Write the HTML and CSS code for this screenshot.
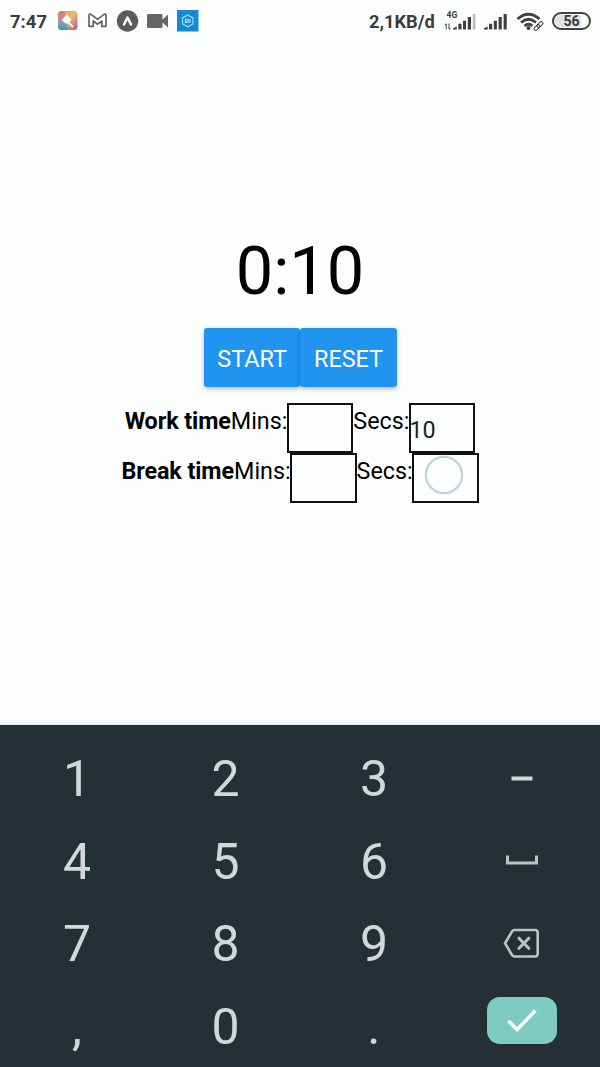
FILE: index.html
```html
<!DOCTYPE html>
<html lang="en">
<head>
<meta charset="utf-8">
<title>Timer</title>
<link rel="stylesheet" href="styles.css">
</head>
<body>
<div class="screen">
  <header class="status">
    <span class="clock">7:47</span>
    <svg class="tray" width="144" height="24" viewBox="0 0 144 24">
      <defs>
        <linearGradient id="warm" x1="0" y1="0" x2="1" y2="1"><stop offset="0" stop-color="#f08a62"/><stop offset=".5" stop-color="#e5bd62"/><stop offset="1" stop-color="#b84fa0"/></linearGradient>
        <linearGradient id="cool" x1="0" y1="0" x2="0" y2="1"><stop offset="0" stop-color="#e87858"/><stop offset=".45" stop-color="#b695a8"/><stop offset="1" stop-color="#279cd0"/></linearGradient>
      </defs>
      <rect x="3" y="2" width="19.500" height="19" rx="3.500" fill="url(#warm)"/>
      <path d="M6.500 2H9L13 21H6.500A3.500 3.500 0 0 1 3 17.500V5.500A3.500 3.500 0 0 1 6.500 2Z" fill="url(#cool)"/>
      <path d="M11.600 5.300L16.600 10.500L14.600 13.300L18.600 17.300L17.300 18.600L13.300 14.600L10.500 14.500L7 11Z" fill="#fff"/>
      <path d="M34 17.300V6.800Q34 4.500 36 5.300L42.500 10.300L49 5.300Q51 4.500 51 6.800V17.300H46.800V12L42.500 15.200L38.200 12V17.300Z" fill="none" stroke="#626262" stroke-width="1.700" stroke-linejoin="round"/>
      <circle cx="72.500" cy="12" r="10.700" fill="#5b5b5b"/>
      <path d="M69 15.500L72.500 8.500L76 15.500" fill="none" stroke="#fff" stroke-width="2.500" stroke-linecap="round" stroke-linejoin="round"/>
      <path d="M93.500 5H106Q107.500 5 107.500 6.500V10.500L113 5.500V18.500L107.500 13.500V17.500Q107.500 19 106 19H93.500Q92 19 92 17.500V6.500Q92 5 93.500 5Z" fill="#656565"/>
      <rect x="122" y="1" width="21.500" height="21.500" fill="#1689d4"/>
      <path d="M132.700 6L137.900 8.900V14.900L132.700 17.800L127.500 14.900V8.900Z" fill="none" stroke="#a6e2f5" stroke-width="1.100"/>
      <path d="M130.400 14V10.300H133.200V14M131.800 12V14M135 10V14" fill="none" stroke="#d1f3fb" stroke-width=".9"/>
    </svg>
    <span class="speed">2,1KB/d</span>
    <svg class="radio" width="104" height="30" viewBox="0 0 104 30">
      <text class="network" x="2.500" y="11.500">4G</text>
      <path d="M2.300 23.500V18M.8 19.500L2.300 17.500M5 17.500V23M5 23.500L6.300 21.500" fill="none" stroke="#666" stroke-width="1.200"/>
      <path d="M9 23.500V22.300L12.800 20.500V23.500ZM14.300 17.800H17.500V23.500H14.300ZM19 14.800H22V23.500H19ZM23.800 11H27V23.500H23.800Z" fill="#3f3f3f"/>
      <path d="M28.800 8H31.500V23.500H28.800Z" fill="#bcbcbc"/>
      <path d="M40 23.500V22.300L43.700 20.500V23.500ZM45 17.800H48.200V23.500H45ZM49.800 14.800H52.900V23.500H49.800ZM54.600 11H57.800V23.500H54.600ZM59.600 8H62.700V23.500H59.600Z" fill="#3f3f3f"/>
      <g fill="none" stroke="#3f3f3f">
        <path d="M73.500 13Q84.500 3.500 95.500 13" stroke-width="2.700"/>
        <path d="M77 16.500Q84.500 10 92 16.500" stroke-width="2.700"/>
        <path d="M80.500 20Q84.500 16.500 88.500 20" stroke-width="2.700"/>
        <rect x="-3.500" y="-1.700" width="7" height="3.400" rx="1.700" transform="translate(93 21.500) rotate(-45)"/>
        <rect x="-3.500" y="-1.700" width="7" height="3.400" rx="1.700" transform="translate(96 18.500) rotate(-45)"/>
      </g>
      <circle cx="84.500" cy="22" r="2" fill="#3f3f3f"/>
    </svg>
    <span class="battery">56</span>
  </header>

  <main class="app">
    <div class="timer">0:10</div>
    <div class="actions"><button class="button">START</button><button class="button">RESET</button></div>
    <div class="field-row"><b>Work time</b><span class="unit">Mins:</span><span class="box"></span><span class="unit">Secs:</span><span class="box">10</span></div>
    <div class="field-row"><b>Break time</b><span class="unit">Mins:</span><span class="box"></span><span class="unit">Secs:</span><span class="box"><i class="touch"></i></span></div>
  </main>

  <section class="keypad">
    <span class="key">1</span><span class="key">2</span><span class="key">3</span>
    <span class="key"><svg width="40" height="40" viewBox="0 0 40 40"><path d="M9.500 17.500H30.500V21.500H9.500Z" fill="#d3d7d7"/></svg></span>
    <span class="key">4</span><span class="key">5</span><span class="key">6</span>
    <span class="key"><svg width="40" height="40" viewBox="0 0 40 40"><path d="M5.500 13.500V21H34.500V13.500" fill="none" stroke="#bec3c2" stroke-width="3"/></svg></span>
    <span class="key">7</span><span class="key">8</span><span class="key">9</span>
    <span class="key"><svg width="40" height="40" viewBox="0 0 40 40"><path d="M12.500 6H33Q35.700 6 35.700 8.700V29.800Q35.700 32.500 33 32.500H12.500Q11 32.500 10 31L3 19.250L10 7.500Q11 6 12.500 6Z" fill="none" stroke="#bec3c2" stroke-width="2.600"/><path d="M17 14.200L26.800 24.300M26.800 14.200L17 24.300" fill="none" stroke="#bec3c2" stroke-width="3" stroke-linecap="round"/></svg></span>
    <span class="key">,</span><span class="key">0</span><span class="key">.</span>
    <span class="key"><span class="enter"><svg width="40" height="40" viewBox="0 0 40 40"><path d="M6.500 21L15 29.500L33.500 10.500" fill="none" stroke="#fff" stroke-width="3.400"/></svg></span></span>
  </section>
</div>
</body>
</html>
```
FILE: styles.css
```css
* { box-sizing: border-box; }
body { margin: 0; background: #fdfffe; font-family: Roboto, "Liberation Sans", sans-serif; color: #000; }
.screen { width: 600px; height: 1067px; display: flex; flex-direction: column; overflow: hidden; }

.status { height: 42px; flex: none; display: flex; align-items: center; padding: 0 9px 0 10px; color: #3b3b3b; font-weight: 700; font-size: 18.500px; line-height: 22px; }
.clock { width: 45px; flex: none; padding-top: 1px; }
.tray { flex: none; }
.speed { flex: none; margin-left: auto; width: 75px; padding-top: 1px; white-space: nowrap; font-size: 18.300px; }
.radio { flex: none; margin-top: -1px; }
.network { font-size: 8.500px; font-weight: 700; fill: #3b3b3b; }
.battery { flex: none; width: 39px; height: 17.500px; margin-left: 4px; border: 2px solid #424242; border-radius: 9px; background: linear-gradient(90deg, #e0e1e0 76%, #fdfffe 76%); box-shadow: inset 0 0 0 1px #fdfffe; font-size: 14px; line-height: 14px; text-align: center; }

.app { flex: 1; display: flex; flex-direction: column; align-items: center; padding-top: 190px; }
.timer { font-size: 66.670px; line-height: 78px; }
.actions { display: flex; margin: 18.300px 0 16.500px .6px; }
.button { width: 96.400px; height: 58.300px; padding: 3px 0 0; border: 0; border-radius: 3px; background: #2094ef; color: #fff; font: 23.330px/28px Roboto, sans-serif; box-shadow: 0 2px 5px rgba(0, 0, 0, .27); }
.field-row { display: flex; height: 50px; font-size: 23.330px; line-height: 36px; }
.field-row b { letter-spacing: -.08px; }
.unit { margin-right: -.6px; }
.box { display: block; position: relative; width: 66.500px; height: 50px; border: 2px solid #111; line-height: 50px; color: #222; text-indent: -1.500px; }
.touch { position: absolute; left: 10.500px; top: 1px; width: 38px; height: 38px; border: 2px solid #bad0df; border-radius: 50%; box-shadow: 0 0 2px #c8d4dc; }

.keypad { flex: none; height: 342px; padding: 12.500px 3px 0 2.700px; display: grid; grid-template-columns: repeat(4, 148.500px); grid-template-rows: repeat(4, 82.700px); background: #243034; color: #d3d7d7; font-size: 50px; line-height: 60px; box-shadow: 0 -1px 3px rgba(0, 0, 0, .15); }
.key { display: flex; align-items: center; justify-content: center; }
.key svg { display: block; }
.enter { width: 70px; height: 47px; border-radius: 13px; background: #80cbc1; display: flex; align-items: center; justify-content: center; margin-top: -13.500px; }
```
